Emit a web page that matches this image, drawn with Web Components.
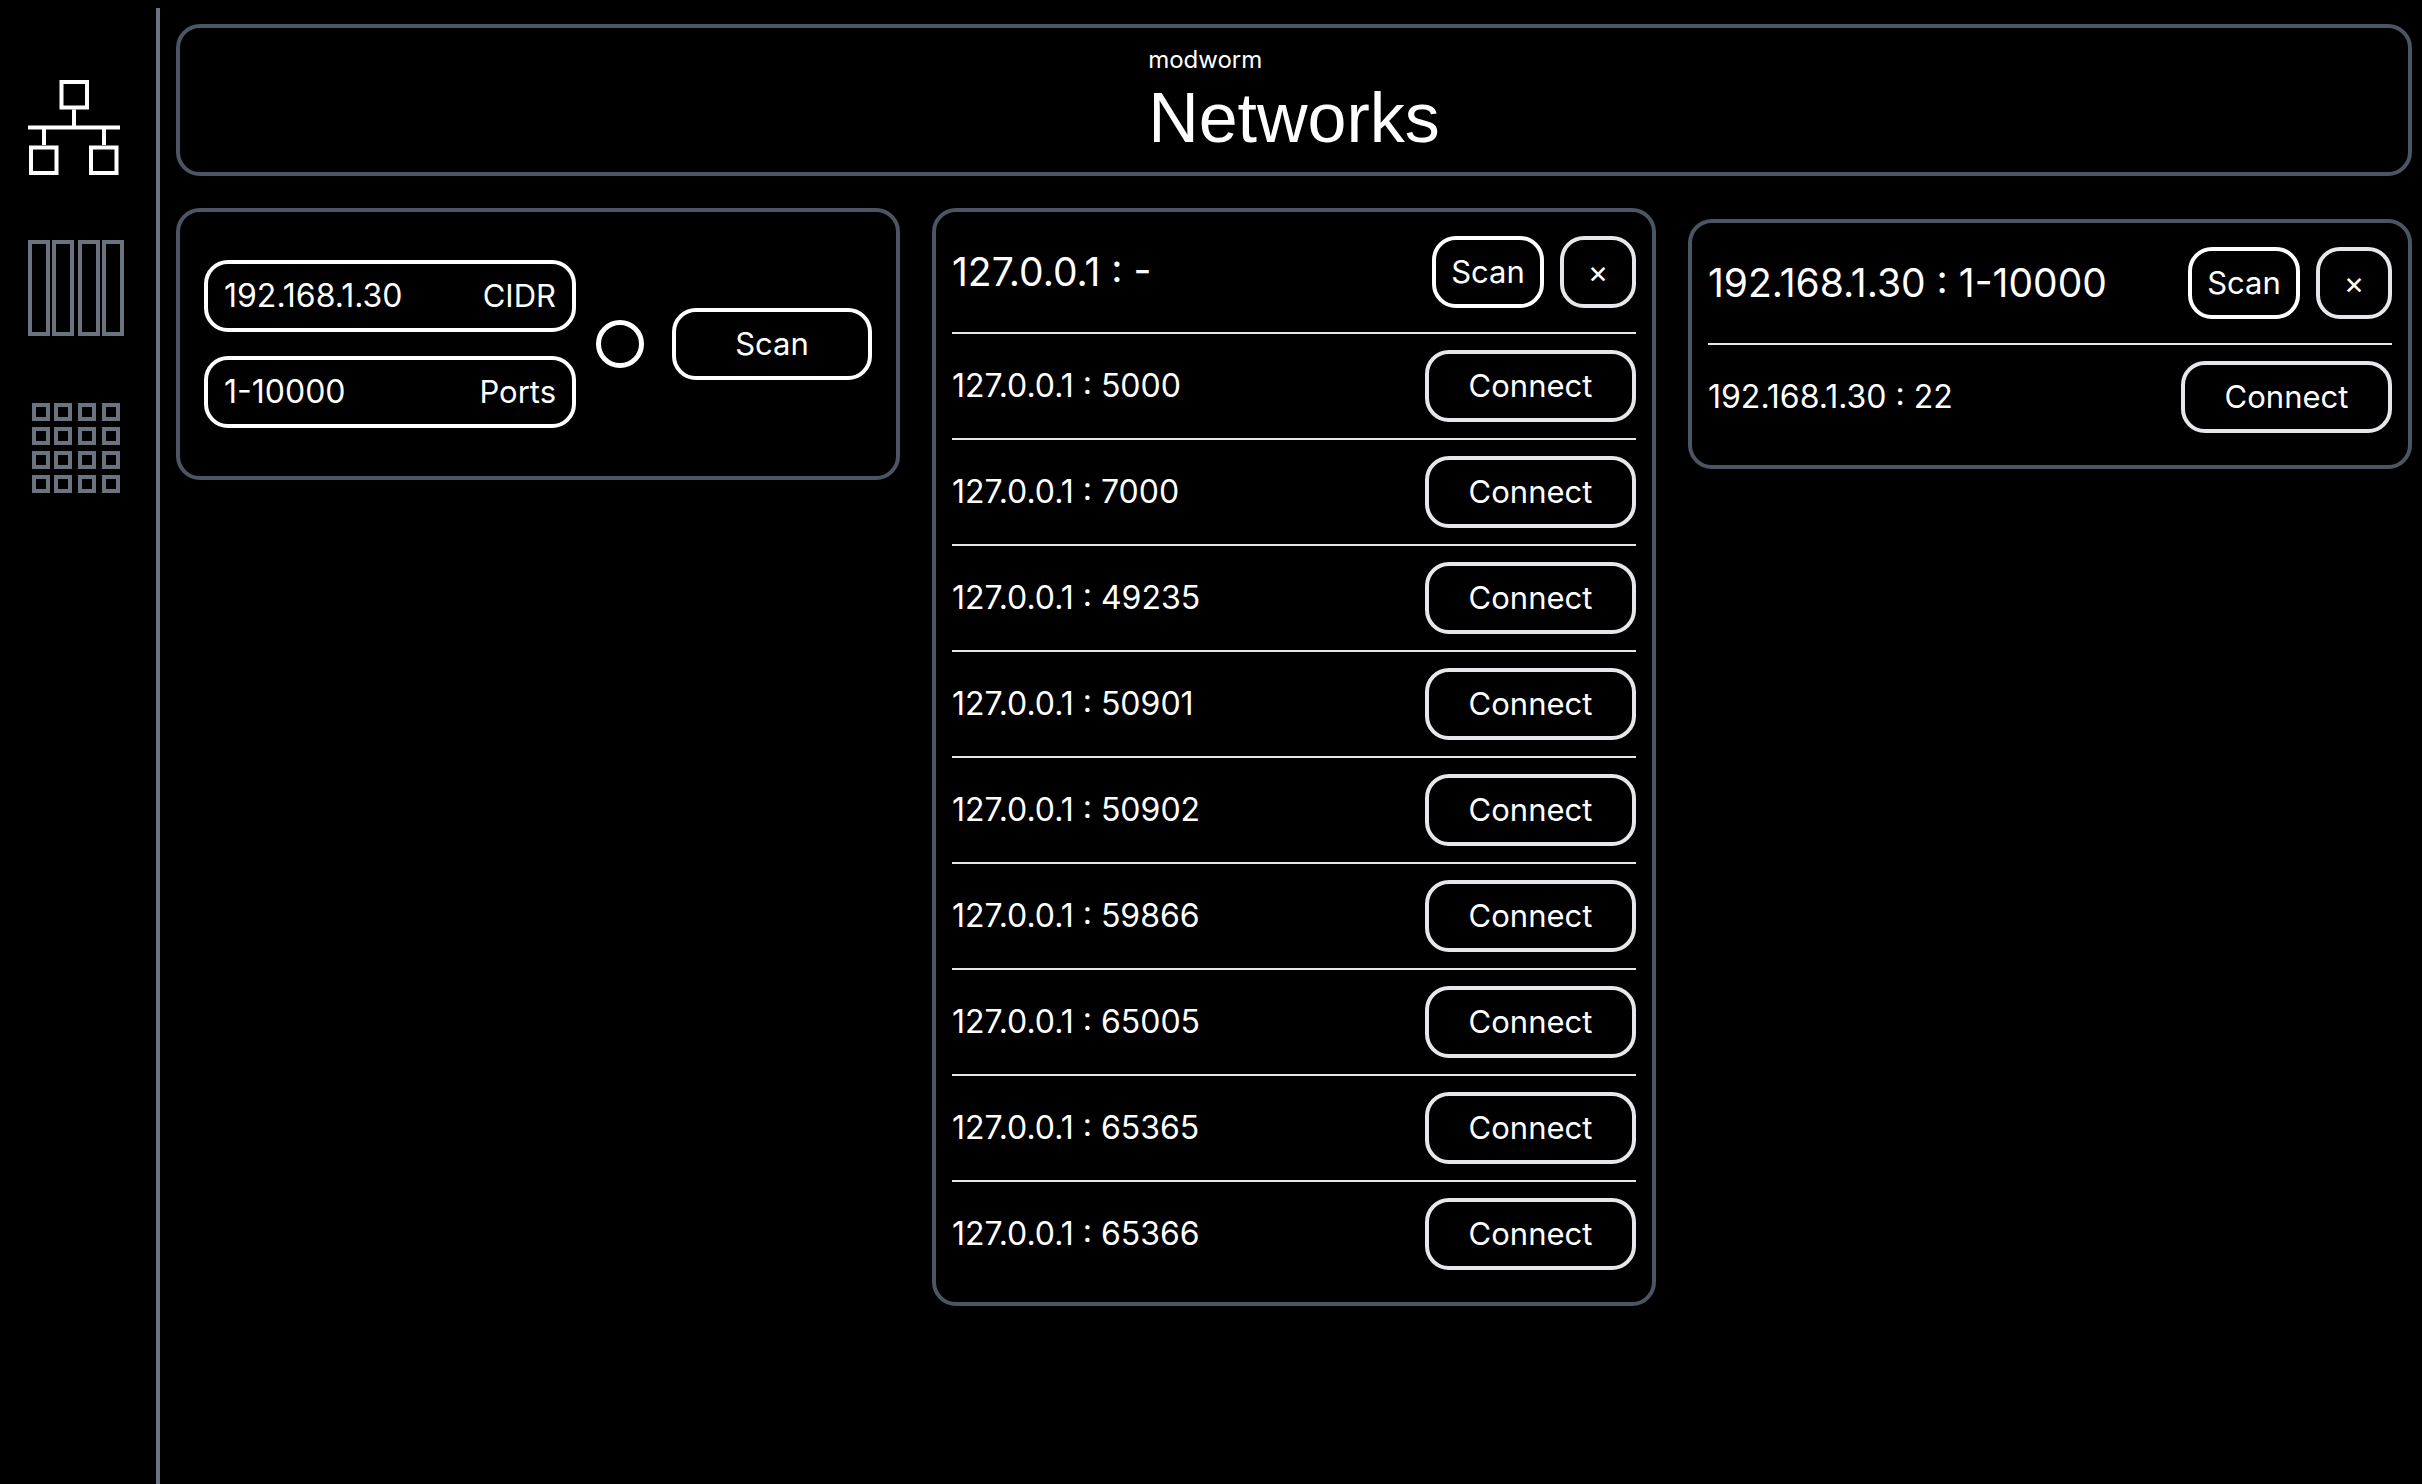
<!DOCTYPE html>
<html lang="en">
<head>
<meta charset="utf-8">
<title>modworm - Networks</title>
<style>
  :root {
    --line: #4b5563;
    --muted: #6b7280;
    --soft: #e5e7eb;
    --radius: 24px;
  }
  body {
    margin: 0;
    background: #000;
    color: #fff;
    font-family: Inter, "Liberation Sans", sans-serif;
    font-size: 31px;
    line-height: 48px;
  }
</style>
</head>
<body>
<mw-shell>
  <mw-sidebar slot="side"></mw-sidebar>
  <mw-header app="modworm" heading="Networks"></mw-header>
  <mw-columns>
    <mw-scan-form cidr="192.168.1.30" ports="1-10000"></mw-scan-form>
    <mw-network host="127.0.0.1" range="-" ports="5000,7000,49235,50901,50902,59866,65005,65365,65366"></mw-network>
    <mw-network class="late" host="192.168.1.30" range="1-10000" ports="22"></mw-network>
  </mw-columns>
</mw-shell>

<script>
function makeTemplate(html) {
  const template = document.createElement('template');
  template.innerHTML = html;
  return template;
}

// PAGE SHELL
const shellTemplate = makeTemplate(`
<style>
:host{
  display: flex;
  box-sizing: border-box;
  min-height: 100vh;
  padding: 8px 10px 0 0;
}
main{
  flex: 1;
  min-width: 0;
  display: flex;
  flex-direction: column;
  gap: 32px;
  padding: 16px 0 0 16px;
}
</style>
<slot name="side"></slot>
<main><slot></slot></main>
`);
class mwShell extends HTMLElement {
  constructor() {
    super();
    this.attachShadow({ mode: 'open' });
    this.shadowRoot.appendChild(shellTemplate.content.cloneNode(true));
  }
}
window.customElements.define('mw-shell', mwShell);

// SIDEBAR
const sidebarTemplate = makeTemplate(`
<style>
:host{
  display: block;
  border-right: 4px solid var(--muted);
}
nav{
  display: flex;
  flex-direction: column;
  gap: 64px;
  padding: 72px 32px 72px 28px;
}
a{
  display: block;
  height: 96px;
  color: var(--muted);
}
a.active{
  color: #fff;
}
svg{
  display: block;
  width: 96px;
  height: 96px;
  fill: none;
  stroke: currentColor;
  stroke-width: 4;
}
</style>
<nav>
  <a class="active" href="#networks" aria-label="Networks">
    <svg viewBox="0 0 96 96">
      <rect x="33.5" y="2" width="25.5" height="25.5"/>
      <path d="M46 29.5V46M0 47.4H92M16 49V65M76 49V65"/>
      <rect x="3" y="67.5" width="25.5" height="25.5"/>
      <rect x="63" y="67.5" width="25.5" height="25.5"/>
    </svg>
  </a>
  <a href="#racks" aria-label="Racks">
    <svg viewBox="0 0 96 96">
      <rect x="2" y="2" width="18" height="92"/>
      <rect x="26" y="2" width="18" height="92"/>
      <rect x="52" y="2" width="18" height="92"/>
      <rect x="76" y="2" width="18" height="92"/>
    </svg>
  </a>
  <a href="#grid" aria-label="Grid">
    <svg viewBox="0 0 96 96"></svg>
  </a>
</nav>
`);
class mwSidebar extends HTMLElement {
  constructor() {
    super();
    this.attachShadow({ mode: 'open' });
    this.shadowRoot.appendChild(sidebarTemplate.content.cloneNode(true));

    // 4 x 4 squares of the grid icon
    let cells = '';
    [5, 29, 53, 77].forEach(y => {
      [6, 28, 52, 76].forEach(x => {
        cells += `<rect x="${x}" y="${y}" width="14" height="14"/>`;
      });
    });
    this.shadowRoot.querySelector('a:last-child svg').innerHTML = cells;
  }
}
window.customElements.define('mw-sidebar', mwSidebar);

// HEADER
const headerTemplate = makeTemplate(`
<style>
:host{
  display: flex;
  justify-content: center;
  padding: 16px 16px 18px;
  border: 4px solid var(--line);
  border-radius: var(--radius);
}
p{
  margin: 0 0 6px;
  font-size: 24px;
  line-height: 32px;
}
h1{
  margin: 0;
  font-family: "Liberation Sans", sans-serif;
  font-size: 70px;
  line-height: 72px;
  font-weight: 400;
}
</style>
<div>
  <p></p>
  <h1></h1>
</div>
`);
class mwHeader extends HTMLElement {
  constructor() {
    super();
    this.attachShadow({ mode: 'open' });
    this.shadowRoot.appendChild(headerTemplate.content.cloneNode(true));
    this.shadowRoot.querySelector('p').textContent = this.getAttribute('app');
    this.shadowRoot.querySelector('h1').textContent = this.getAttribute('heading');
  }
}
window.customElements.define('mw-header', mwHeader);

// COLUMNS
const columnsTemplate = makeTemplate(`
<style>
:host{
  display: grid;
  grid-template-columns: repeat(3, minmax(0, 1fr));
  align-items: start;
  gap: 32px;
}
::slotted(.late){
  margin-top: 11px;
}
</style>
<slot></slot>
`);
class mwColumns extends HTMLElement {
  constructor() {
    super();
    this.attachShadow({ mode: 'open' });
    this.shadowRoot.appendChild(columnsTemplate.content.cloneNode(true));
  }
}
window.customElements.define('mw-columns', mwColumns);

// BUTTON
const buttonTemplate = makeTemplate(`
<style>
:host{
  display: block;
  width: 200px;
  flex: none;
}
:host([size="connect"]){
  width: 211px;
}
:host([size="small"]){
  width: 112px;
}
:host([size="icon"]){
  width: 76px;
}
button{
  display: block;
  box-sizing: border-box;
  width: 100%;
  height: 72px;
  padding: 0;
  border: 4px solid #fff;
  border-radius: var(--radius);
  background: transparent;
  color: inherit;
  font: inherit;
  text-align: center;
  cursor: pointer;
}
:host([tone="soft"]) button{
  border-color: var(--soft);
}
button:hover{
  background: #1f2937;
}
</style>
<button type="button"><slot></slot></button>
`);
class mwButton extends HTMLElement {
  constructor() {
    super();
    this.attachShadow({ mode: 'open' });
    this.shadowRoot.appendChild(buttonTemplate.content.cloneNode(true));
  }
}
window.customElements.define('mw-button', mwButton);

// SCAN FORM
const scanFormTemplate = makeTemplate(`
<style>
:host{
  display: block;
  padding: 48px 24px;
  border: 4px solid var(--line);
  border-radius: var(--radius);
}
form{
  display: flex;
  align-items: center;
  gap: 28px;
}
.target{
  flex: 1;
  min-width: 0;
  display: flex;
  align-items: center;
  gap: 20px;
}
.fields{
  flex: 1;
  min-width: 0;
  display: flex;
  flex-direction: column;
  gap: 24px;
}
label{
  display: flex;
  align-items: center;
  box-sizing: border-box;
  height: 72px;
  padding: 0 16px;
  border: 4px solid #fff;
  border-radius: var(--radius);
}
input{
  flex: 1;
  min-width: 0;
  padding: 0;
  border: 0;
  outline: none;
  background: transparent;
  color: inherit;
  font: inherit;
  font-size: 32px;
}
.status{
  box-sizing: border-box;
  flex: none;
  width: 48px;
  height: 48px;
  border: 5px solid #fff;
  border-radius: 50%;
}
</style>
<form>
  <div class="target">
    <div class="fields">
      <label><input id="cidr" type="text"><span>CIDR</span></label>
      <label><input id="ports" type="text"><span>Ports</span></label>
    </div>
    <div class="status"></div>
  </div>
  <mw-button>Scan</mw-button>
</form>
`);
class mwScanForm extends HTMLElement {
  constructor() {
    super();
    this.attachShadow({ mode: 'open' });
    this.shadowRoot.appendChild(scanFormTemplate.content.cloneNode(true));
    this.shadowRoot.getElementById('cidr').value = this.getAttribute('cidr');
    this.shadowRoot.getElementById('ports').value = this.getAttribute('ports');
  }
}
window.customElements.define('mw-scan-form', mwScanForm);

// NETWORK CARD
const networkTemplate = makeTemplate(`
<style>
:host{
  display: block;
  padding: 24px 16px 16px;
  border: 4px solid var(--line);
  border-radius: var(--radius);
}
header{
  display: flex;
  align-items: center;
  gap: 16px;
  padding-bottom: 24px;
}
h2{
  flex: 1;
  min-width: 0;
  margin: 0;
  font-size: 39px;
  font-weight: 400;
}
ul{
  margin: 0;
  padding: 0;
  list-style: none;
}
li{
  display: flex;
  align-items: center;
  justify-content: space-between;
  padding: 16px 0;
  border-top: 2px solid var(--soft);
}
li span{
  font-size: 32px;
}
</style>
<header>
  <h2></h2>
  <mw-button size="small">Scan</mw-button>
  <mw-button size="icon" tone="soft">×</mw-button>
</header>
<ul></ul>
`);
class mwNetwork extends HTMLElement {
  constructor() {
    super();
    this.attachShadow({ mode: 'open' });
    this.shadowRoot.appendChild(networkTemplate.content.cloneNode(true));

    const host = this.getAttribute('host');
    const list = this.shadowRoot.querySelector('ul');
    this.shadowRoot.querySelector('h2').textContent = `${host} : ${this.getAttribute('range')}`;

    this.getAttribute('ports').split(',').forEach(port => {
      const row = document.createElement('li');
      row.innerHTML = `<span>${host} : ${port}</span><mw-button size="connect" tone="soft">Connect</mw-button>`;
      list.appendChild(row);
    });
  }
}
window.customElements.define('mw-network', mwNetwork);
</script>
</body>
</html>
